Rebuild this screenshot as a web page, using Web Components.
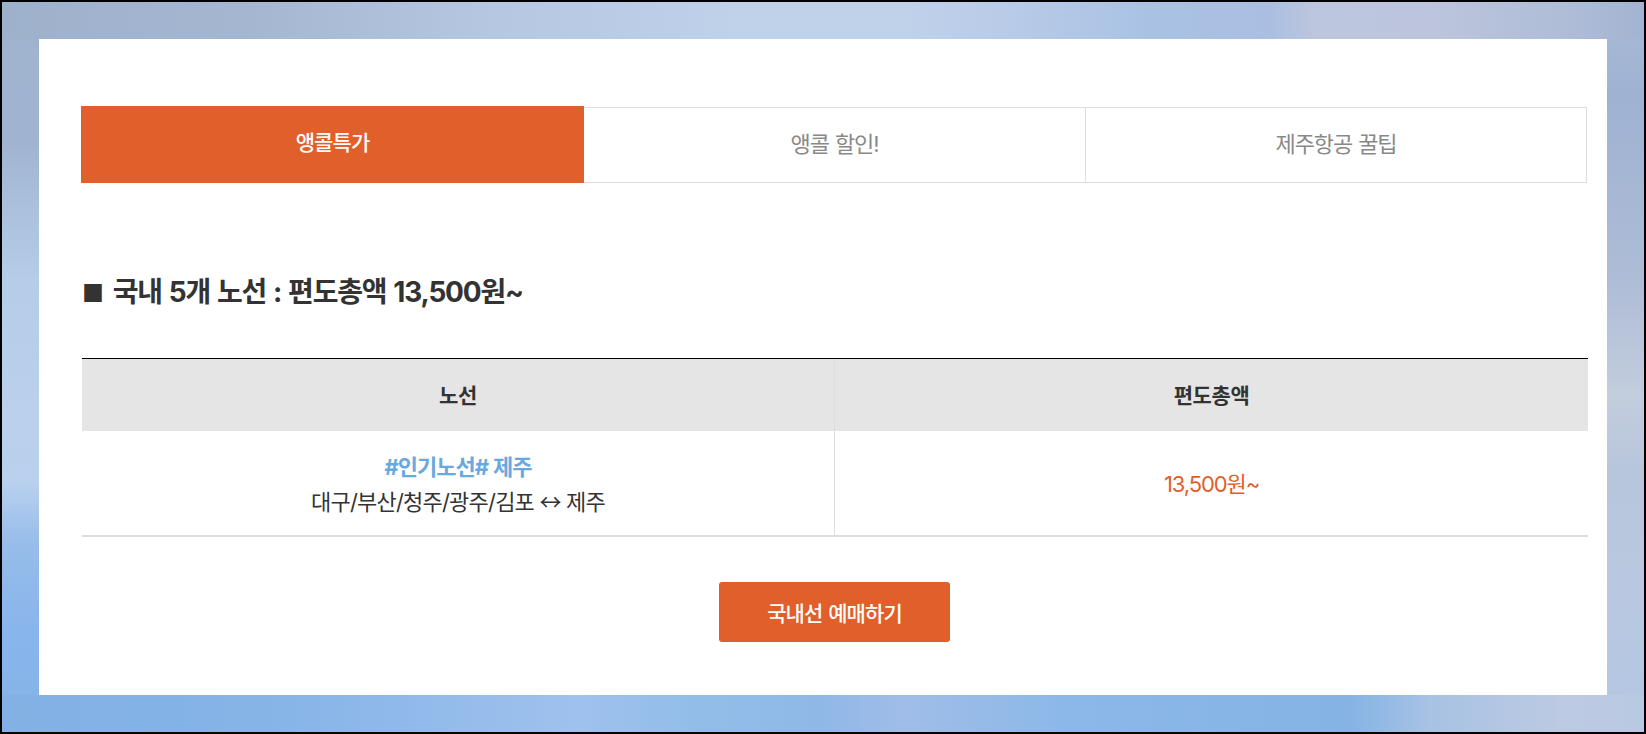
<!DOCTYPE html>
<html lang="ko">
<head>
<meta charset="utf-8">
<title>앵콜특가</title>
<style>
  html, body { margin: 0; padding: 0; }
  body { font-family: Inter, "Noto Sans CJK KR", "Noto Sans", sans-serif; color: #333; }
</style>
</head>
<body>
<promo-page>
  <promo-tabs>
    <promo-tab active>앵콜특가</promo-tab>
    <promo-tab>앵콜 할인!</promo-tab>
    <promo-tab>제주항공 꿀팁</promo-tab>
  </promo-tabs>
  <promo-heading><span slot="mark">■</span>국내 5개 노선 : 편도총액 13,500원~</promo-heading>
  <fare-table>
    <fare-row slot="rows">
      <span slot="route">#인기노선# 제주</span>
      <span slot="cities">대구/부산/청주/광주/김포 <span style="font-family: 'Noto Sans CJK KR', sans-serif">↔</span> 제주</span>
      <span slot="price">13,500원~</span>
    </fare-row>
  </fare-table>
  <book-button>국내선 예매하기</book-button>
</promo-page>

<script>
class PromoPage extends HTMLElement {
    constructor() {
        super();
        this.shadow = this.attachShadow({ mode: 'open' });
        this.shadow.innerHTML = `
        <style>
            :host{
                display: block;
                box-sizing: border-box;
                height: 734px;
                border: 2px solid #000;
                padding: 37px;
                background:
                    linear-gradient(90deg, #9eb1cb 0, #a5b6d1 15%, #b5c7e1 30%, #c0d1ea 45%, #c0d1ea 55%, #b7cae7 62%, #a9c2e4 70%, #aabee2 77%, #bcc6dc 80%, #bcc5dc 87%, #afbdd7 95%, #a3b4d2 100%) top / 100% 37px no-repeat,
                    linear-gradient(90deg, #84b1e4 0, #83b2e6 10%, #8ab6e8 20%, #9fc1ee 35%, #93bde9 42%, #8fb8e8 50%, #a0bde8 55%, #8bb8e8 65%, #85b3e4 82%, #a8c2e4 87%, #bccae2 95%, #bac9e2 100%) bottom / 100% 37px no-repeat,
                    linear-gradient(180deg, #a0b3cd 0, #a0b4d2 19%, #b5cde8 38%, #bad0ec 57%, #b9d0ee 66%, #97bde9 74%, #88b5ec 86%, #85b3e6 100%) left / 37px 100% no-repeat,
                    linear-gradient(180deg, #a9bbd6 0, #9fb2d2 13%, #aebcd6 38%, #c2cddd 54%, #b8c6dc 64%, #b9c8e0 83%, #b3c6e4 100%) right / 37px 100% no-repeat;
            }
            .card{
                box-sizing: border-box;
                height: 656px;
                background: #fff;
                padding: 67px 19px 0 42px;
                display: flex;
                flex-direction: column;
            }
        </style>
        <div class="card"><slot></slot></div>`;
    }
}

class PromoTabs extends HTMLElement {
    constructor() {
        super();
        this.shadow = this.attachShadow({ mode: 'open' });
        this.shadow.innerHTML = `
        <style>
            :host{
                display: grid;
                grid-template-columns: 503px 502px 501px;
                height: 77px;
            }
        </style>
        <slot></slot>`;
    }
}

class PromoTab extends HTMLElement {
    constructor() {
        super();
        this.shadow = this.attachShadow({ mode: 'open' });
        this.shadow.innerHTML = `
        <style>
            :host{
                display: flex;
                align-items: center;
                justify-content: center;
                box-sizing: border-box;
                margin-top: 1px;
                padding-bottom: 7px;
                border: 1px solid #ddd;
                border-left: 0;
                font-size: 22px;
                letter-spacing: -1.1px;
                word-spacing: 1px;
                color: #888;
            }
            :host([active]){
                margin-top: 0;
                border: 0;
                background: #e15f2a;
                color: #fff;
                font-size: 21px;
                letter-spacing: -0.9px;
                font-weight: 500;
            }
        </style>
        <slot></slot>`;
    }
}

class PromoHeading extends HTMLElement {
    constructor() {
        super();
        this.shadow = this.attachShadow({ mode: 'open' });
        this.shadow.innerHTML = `
        <style>
            :host{
                display: block;
                margin-top: 91px;
                font-size: 28px;
                line-height: 36px;
                font-weight: 700;
                letter-spacing: -1.2px;
                word-spacing: 1.5px;
                color: #333;
            }
            .mark{
                font-size: 24px;
                margin: 0 10px 0 1px;
            }
        </style>
        <span class="mark"><slot name="mark"></slot></span><slot></slot>`;
    }
}

class FareTable extends HTMLElement {
    constructor() {
        super();
        this.shadow = this.attachShadow({ mode: 'open' });
        this.shadow.innerHTML = `
        <style>
            :host{
                display: block;
                margin: 46px 0 0 1px;
                border-top: 1px solid #000;
            }
            .head{
                display: grid;
                grid-template-columns: 753px 1fr;
                height: 72px;
                background: #e5e5e5;
            }
            .head div{
                display: flex;
                align-items: center;
                justify-content: center;
                padding-bottom: 2px;
                font-size: 21px;
                font-weight: 700;
                letter-spacing: -0.4px;
                color: #333;
            }
            .head div:first-child{ border-right: 1px solid #ddd; }
        </style>
        <div class="head"><div>노선</div><div>편도총액</div></div>
        <slot name="rows"></slot>`;
    }
}

class FareRow extends HTMLElement {
    constructor() {
        super();
        this.shadow = this.attachShadow({ mode: 'open' });
        this.shadow.innerHTML = `
        <style>
            :host{
                display: grid;
                grid-template-columns: 753px 1fr;
                height: 106px;
                box-sizing: border-box;
                border-bottom: 2px solid #ddd;
            }
            .route{
                display: flex;
                flex-direction: column;
                align-items: center;
                justify-content: center;
                padding-top: 2px;
                border-right: 1px solid #ddd;
            }
            .tag{
                font-size: 22px;
                line-height: 33px;
                font-weight: 700;
                letter-spacing: -1px;
                word-spacing: 1px;
                color: #6aa8e0;
            }
            .cities{
                font-size: 22px;
                line-height: 32px;
                letter-spacing: -0.8px;
                color: #333;
            }
            .price{
                display: flex;
                align-items: center;
                justify-content: center;
                padding-bottom: 2px;
                font-size: 22px;
                letter-spacing: -1.1px;
                color: #e15f2a;
            }
        </style>
        <div class="route">
            <div class="tag"><slot name="route"></slot></div>
            <div class="cities"><slot name="cities"></slot></div>
        </div>
        <div class="price"><slot name="price"></slot></div>`;
    }
}

class BookButton extends HTMLElement {
    constructor() {
        super();
        this.shadow = this.attachShadow({ mode: 'open' });
        this.shadow.innerHTML = `
        <style>
            :host{
                display: flex;
                align-items: center;
                justify-content: center;
                align-self: center;
                box-sizing: border-box;
                width: 231px;
                height: 60px;
                margin: 45px 0 0 0;
                border-radius: 3px;
                background: #e15f2a;
                color: #fff;
                font-size: 21px;
                font-weight: 500;
                letter-spacing: -0.9px;
                word-spacing: 1px;
            }
        </style>
        <slot></slot>`;
    }
}

customElements.define('promo-page', PromoPage);
customElements.define('promo-tabs', PromoTabs);
customElements.define('promo-tab', PromoTab);
customElements.define('promo-heading', PromoHeading);
customElements.define('fare-table', FareTable);
customElements.define('fare-row', FareRow);
customElements.define('book-button', BookButton);
</script>
</body>
</html>
